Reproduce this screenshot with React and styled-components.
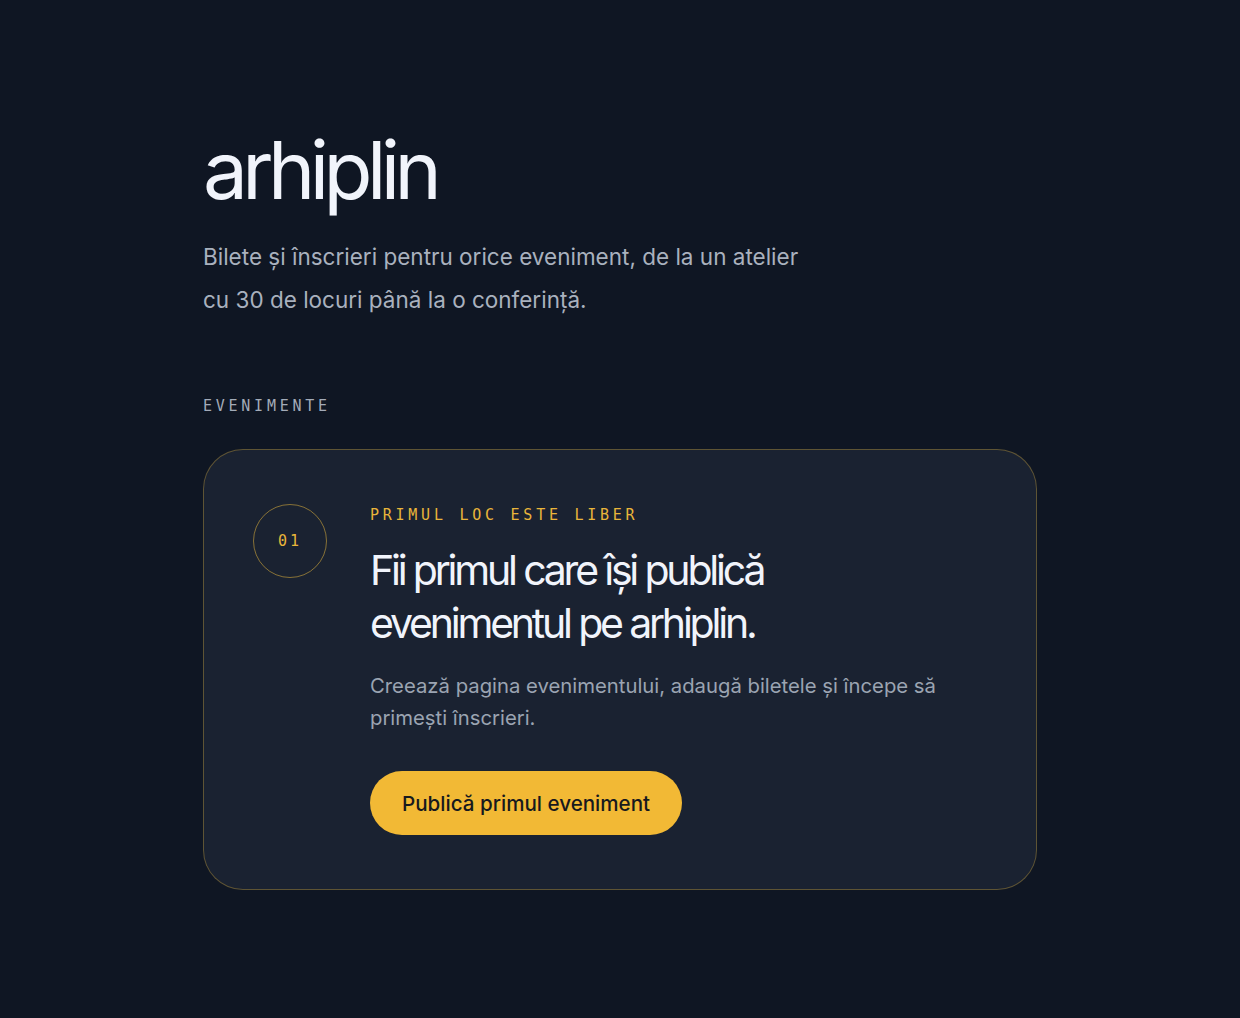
import styled, { createGlobalStyle } from "styled-components";

const GlobalStyle = createGlobalStyle`
  html, body {
    margin: 0;
    padding: 0;
    background: #0f1623;
  }
  body {
    font-family: Inter, "Noto Sans", sans-serif;
    color: #f1f4f9;
  }
`;

const Page = styled.main`
  min-height: 1018px;
  box-sizing: border-box;
  padding: 126px 0 80px;
`;

const Container = styled.div`
  width: 834px;
  margin: 0 auto;
`;

const Brand = styled.h1`
  margin: 0;
  font-size: 80px;
  line-height: 1.1;
  font-weight: 400;
  letter-spacing: -0.07em;
  color: #f1f4fb;
`;

const Lead = styled.p`
  margin: 21px 0 0;
  max-width: 620px;
  font-size: 22.5px;
  line-height: 43px;
  color: #a9b1be;
`;

const Mono = styled.span`
  font-family: "DejaVu Sans Mono", "Liberation Mono", monospace;
  font-size: 15px;
  letter-spacing: ${(p) => p.$spacing || "0.25em"};
  color: ${(p) => p.$color || "#a3abb8"};
  text-transform: uppercase;
`;

const SectionLabel = styled.div`
  margin-top: 74px;
  line-height: 20px;
`;

const Card = styled.section`
  margin-top: 33px;
  display: flex;
  gap: 43px;
  padding: 54px 80px 54px 49px;
  background: #1a2231;
  border: 1px solid rgba(224, 178, 60, 0.35);
  border-radius: 40px;
`;

const Badge = styled.div`
  flex: none;
  width: 74px;
  height: 74px;
  box-sizing: border-box;
  border-radius: 50%;
  border: 1px solid rgba(224, 178, 60, 0.55);
  display: flex;
  align-items: center;
  justify-content: center;
`;

const Body = styled.div`
  display: flex;
  flex-direction: column;
  align-items: flex-start;
`;

const Kicker = styled.div`
  line-height: 20px;
`;

const Heading = styled.h2`
  margin: 19px 0 0;
  font-size: 41px;
  line-height: 53px;
  font-weight: 400;
  letter-spacing: -0.078em;
  color: #f1f4fb;
`;

const Text = styled.p`
  margin: 20px 0 0;
  max-width: 590px;
  font-size: 20.3px;
  line-height: 32px;
  color: #9ba4b2;
`;

const Button = styled.button`
  margin-top: 37px;
  height: 64px;
  padding: 0 32px;
  border: none;
  border-radius: 32px;
  background: #f2b935;
  color: #17191e;
  font-family: Inter, "Noto Sans", sans-serif;
  font-size: 20.6px;
  font-weight: 500;
  cursor: pointer;
`;

export default function App() {
  return (
    <>
      <GlobalStyle />
      <Page>
        <Container>
          <Brand>arhiplin</Brand>
          <Lead>
            Bilete și înscrieri pentru orice eveniment, de la un atelier cu 30
            de locuri până la o conferință.
          </Lead>
          <SectionLabel>
            <Mono>Evenimente</Mono>
          </SectionLabel>
          <Card>
            <Badge>
              <Mono $color="#e9b53a" $spacing="0.2em">01</Mono>
            </Badge>
            <Body>
              <Kicker>
                <Mono $color="#e9b53a">Primul loc este liber</Mono>
              </Kicker>
              <Heading>
                Fii primul care își publică
                <br />
                evenimentul pe arhiplin.
              </Heading>
              <Text>
                Creează pagina evenimentului, adaugă biletele și începe să
                primești înscrieri.
              </Text>
              <Button>Publică primul eveniment</Button>
            </Body>
          </Card>
        </Container>
      </Page>
    </>
  );
}
